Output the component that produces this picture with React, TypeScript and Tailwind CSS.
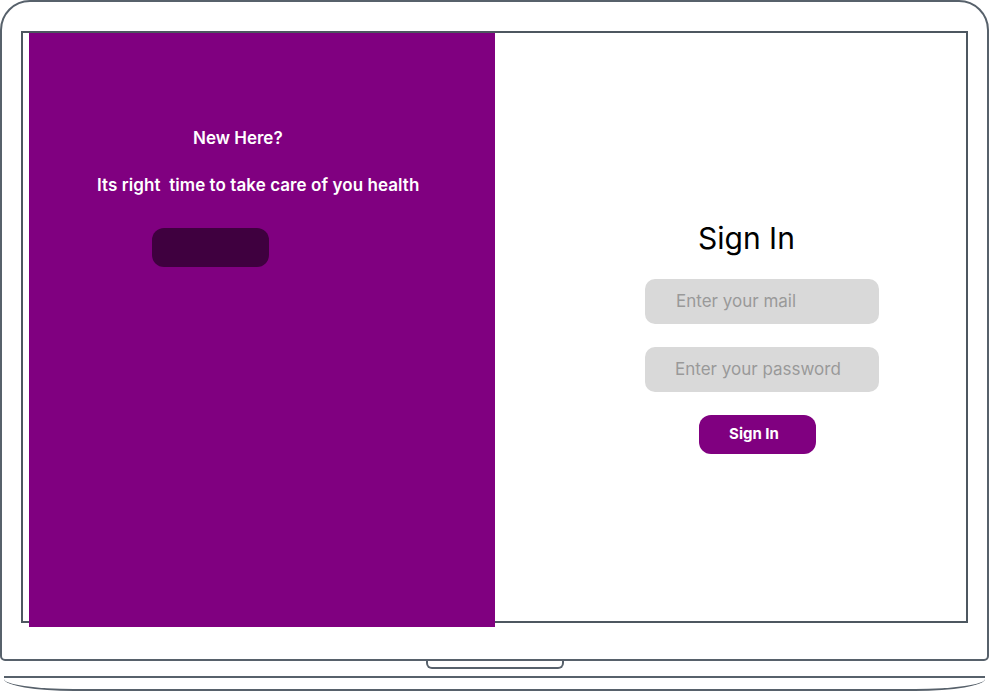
import React from "react";

export default function App() {
  return (
    <div className="w-[989px] h-[691px] bg-white flex flex-col font-['Inter','Noto_Sans',sans-serif] overflow-hidden">
      {/* laptop body */}
      <div className="h-[661px] w-[989px] border-2 border-[#57616b] rounded-t-[30px] rounded-b-[5px] pt-[29px] pl-[19px]">
        {/* screen */}
        <div className="w-[947px] h-[592px] border-2 border-[#4d5760] flex">
          {/* left purple panel */}
          <div className="ml-[6px] w-[466px] h-[594px] shrink-0 bg-[#800080] flex flex-col items-start pt-[95px] relative z-10">
            <p className="ml-[164px] text-white text-[17px] leading-[20px] font-semibold">New Here?</p>
            <p className="ml-[68px] mt-[27px] text-white text-[17px] leading-[20px] font-semibold tracking-[0.07px] whitespace-pre">
              {"Its right  time to take care of you health"}
            </p>
            <button className="ml-[123px] mt-[33px] w-[117px] h-[39px] rounded-[12px] bg-[#3f003f]"></button>
          </div>
          {/* right sign-in area */}
          <div className="flex-1 flex flex-col items-start pl-[150px] pt-[187px] gap-[23px]">
            <h1 className="ml-[53px] text-[30px] leading-[36px] font-normal text-black">Sign In</h1>
            <input
              className="w-[234px] h-[45px] rounded-[10px] bg-[#d9d9d9] pl-[31px] pb-[2px] text-[17px] outline-none placeholder:text-[#999999]"
              placeholder="Enter your mail"
            />
            <input
              className="w-[234px] h-[45px] rounded-[10px] bg-[#d9d9d9] pl-[30px] pb-[2px] text-[17px] outline-none placeholder:text-[#999999]"
              placeholder="Enter your password"
              type="password"
            />
            <button className="ml-[54px] w-[117px] h-[39px] rounded-[12px] bg-[#800080] text-white text-[15px] font-bold pr-[7px] pb-[1px]">
              Sign In
            </button>
          </div>
        </div>
      </div>
      {/* hinge notch */}
      <div className="h-[15px] flex justify-center">
        <div className="-mt-[2px] w-[138px] h-[10px] border-x-2 border-b-2 border-[#57616b] rounded-b-[6px]"></div>
      </div>
      {/* base */}
      <div className="mx-[4px] h-[15px] border-t-2 border-b-2 border-[#57616b] rounded-bl-[70px_12px] rounded-br-[70px_12px]"></div>
    </div>
  );
}
